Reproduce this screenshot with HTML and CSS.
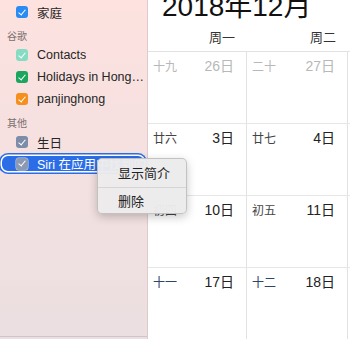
FILE: index.html
```html
<!DOCTYPE html>
<html lang="zh-CN">
<head>
  <meta charset="UTF-8" />
  <title>日历</title>
  <meta name="viewport" content="width=device-width, initial-scale=1.0" />
  <link rel="stylesheet" href="styles.css">
</head>
<body>
  <div class="app">
    <aside class="sidebar">
      <div class="cal-item"><span class="check c-blue"></span><span class="name">家庭</span></div>

      <div class="group-label">谷歌</div>
      <div class="cal-item"><span class="check c-teal"></span><span class="name">Contacts</span></div>
      <div class="cal-item"><span class="check c-green"></span><span class="name">Holidays in Hong…</span></div>
      <div class="cal-item"><span class="check c-orange"></span><span class="name">panjinghong</span></div>

      <div class="group-label">其他</div>
      <div class="cal-item"><span class="check c-slate"></span><span class="name">生日</span></div>
      <div class="cal-item selected"><span class="check c-slate"></span><span class="name">Siri 在应用中找到的事件</span></div>

      <div class="sidebar-fill"></div>
      <div class="sidebar-foot"></div>
    </aside>

    <main class="month">
      <h1 class="title">2018年12月</h1>
      <div class="weekdays">
        <div class="wd">周一</div>
        <div class="wd">周二</div>
        <div class="wd"></div>
      </div>

      <div class="week">
        <div class="day past"><span class="lunar">十九</span><span class="date">26日</span></div>
        <div class="day past"><span class="lunar">二十</span><span class="date">27日</span></div>
        <div class="day"></div>
      </div>
      <div class="week">
        <div class="day"><span class="lunar">廿六</span><span class="date">3日</span></div>
        <div class="day"><span class="lunar">廿七</span><span class="date">4日</span></div>
        <div class="day"></div>
      </div>
      <div class="week">
        <div class="day"><span class="lunar">初四</span><span class="date">10日</span></div>
        <div class="day"><span class="lunar">初五</span><span class="date">11日</span></div>
        <div class="day"></div>
      </div>
      <div class="week">
        <div class="day"><span class="lunar blue">十一</span><span class="date">17日</span></div>
        <div class="day"><span class="lunar blue">十二</span><span class="date">18日</span></div>
        <div class="day"></div>
      </div>
    </main>

    <div class="context-menu">
      <div class="menu-item">显示简介</div>
      <div class="menu-sep"></div>
      <div class="menu-item">删除</div>
    </div>
  </div>
</body>
</html>
```

FILE: styles.css
```css
* { box-sizing: border-box; }

html, body {
  margin: 0;
  height: 100%;
}

body {
  font-family: 'Liberation Sans', 'Noto Sans CJK SC', sans-serif;
  color: #222;
  background: #fff;
  overflow: hidden;
}

.app {
  display: flex;
  height: 100vh;
  position: relative;
}

/* sidebar */

.sidebar {
  width: 148px;
  flex-shrink: 0;
  display: flex;
  flex-direction: column;
  background: linear-gradient(to bottom, #fde2df, #ebdfe1);
  border-right: 1px solid #dfcacc;
}

.cal-item {
  height: 22px;
  display: flex;
  align-items: center;
  padding-left: 16px;
  font-size: 12.5px;
  color: #262626;
}

.cal-item:first-child {
  margin-top: 1px;
}

.cal-item .name {
  margin-left: 9px;
  white-space: nowrap;
  overflow: hidden;
}

.cal-item.selected {
  height: 21px;
  margin-left: -1px;
  padding-left: 17px;
  border-radius: 9px;
  background: #2b6de6;
  box-shadow: inset 0 0 0 1.5px #2b6de6, inset 0 0 0 3px #fff;
  color: #fff;
}

.check {
  position: relative;
  width: 12px;
  height: 12px;
  flex-shrink: 0;
  border-radius: 3px;
}

.check::after {
  content: "";
  position: absolute;
  left: 4px;
  top: 1.5px;
  width: 3px;
  height: 6px;
  border-right: 1.5px solid #fff;
  border-bottom: 1.5px solid #fff;
  transform: rotate(40deg);
}

.c-blue { background: #2a8cf2; }
.c-teal { background: #86dcc3; }
.c-green { background: #1aa75d; }
.c-orange { background: #f5901c; }
.c-slate { background: #7d8ca8; }

.selected .check {
  background: #8b99b2;
  box-shadow: 0 0 0 0.5px #c9d3e6;
}

.group-label {
  height: 21px;
  padding: 8px 0 0 7px;
  font-size: 10px;
  line-height: 11px;
  color: #7a6f70;
}

.sidebar-fill {
  flex: 1;
}

.sidebar-foot {
  height: 3px;
  border-top: 1px solid #cfc5c8;
}

/* month grid */

.month {
  flex: 1;
  display: flex;
  flex-direction: column;
  overflow: hidden;
}

.title {
  margin: -10px 0 0 14px;
  font-size: 28px;
  line-height: 34px;
  font-weight: normal;
  color: #111;
  white-space: nowrap;
}

.weekdays,
.week {
  display: grid;
  grid-template-columns: 98px 101px 1fr;
}

.weekdays {
  height: 28px;
  border-bottom: 1px solid #e2e2e2;
}

.wd {
  text-align: right;
  padding-right: 11px;
  font-size: 13px;
  line-height: 27px;
  color: #333;
}

.week {
  height: 72px;
  flex-shrink: 0;
  border-bottom: 1px solid #e6e6e6;
}

.day {
  display: flex;
  justify-content: space-between;
  align-items: baseline;
  padding: 3px 12px 0 5px;
}

.day + .day {
  border-left: 1px solid #e2e2e2;
}

.lunar {
  font-size: 12px;
  color: #444;
}

.lunar.blue {
  color: #2f4468;
}

.date {
  font-size: 14px;
  color: #222;
}

.past .lunar,
.past .date {
  color: #b8b8b8;
}

/* right-click menu */

.context-menu {
  position: absolute;
  left: 97px;
  top: 158px;
  width: 90px;
  padding: 4px 0 1px;
  background: rgba(236, 235, 236, 0.97);
  border: 0.5px solid rgba(0, 0, 0, 0.18);
  border-radius: 5px;
  box-shadow: 0 3px 10px rgba(0, 0, 0, 0.22);
}

.menu-item {
  height: 21px;
  padding-left: 20px;
  font-size: 13px;
  line-height: 21px;
  color: #222;
}

.menu-sep {
  height: 1px;
  margin: 3px 0;
  background: #d6d5d6;
}
```
